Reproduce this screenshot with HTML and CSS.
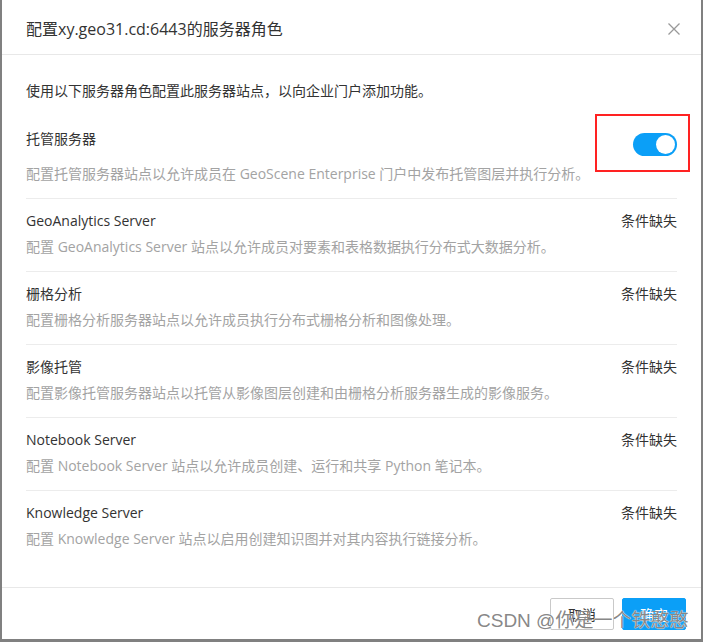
FILE: index.html
```html
<!DOCTYPE html>
<html lang="zh-CN">
<head>
<meta charset="utf-8">
<title>配置服务器角色</title>
<link rel="stylesheet" href="styles.css">
</head>
<body>
<div class="dialog">
  <header class="dlg-head">
    <h2 class="dlg-title">配置xy.geo31.cd:6443的服务器角色</h2>
    <button class="close" aria-label="关闭">
      <svg width="12" height="12" viewBox="0 0 12 12"><path d="M0.5 0.5 L11.5 11.5 M11.5 0.5 L0.5 11.5" stroke="#999" stroke-width="1.3" fill="none"/></svg>
    </button>
  </header>
  <div class="dlg-body">
    <p class="intro">使用以下服务器角色配置此服务器站点，以向企业门户添加功能。</p>
    <ul class="roles">
      <li class="role">
        <div class="role-head">
          <span class="role-name">托管服务器</span>
          <span class="toggle-wrap">
            <span class="toggle"><span class="knob"></span></span>
            <span class="highlight"></span>
          </span>
        </div>
        <p class="role-desc">配置托管服务器站点以允许成员在 GeoScene Enterprise 门户中发布托管图层并执行分析。</p>
      </li>
      <li class="role">
        <div class="role-head">
          <span class="role-name">GeoAnalytics Server</span>
          <span class="status">条件缺失</span>
        </div>
        <p class="role-desc">配置 GeoAnalytics Server 站点以允许成员对要素和表格数据执行分布式大数据分析。</p>
      </li>
      <li class="role">
        <div class="role-head">
          <span class="role-name">栅格分析</span>
          <span class="status">条件缺失</span>
        </div>
        <p class="role-desc">配置栅格分析服务器站点以允许成员执行分布式栅格分析和图像处理。</p>
      </li>
      <li class="role">
        <div class="role-head">
          <span class="role-name">影像托管</span>
          <span class="status">条件缺失</span>
        </div>
        <p class="role-desc">配置影像托管服务器站点以托管从影像图层创建和由栅格分析服务器生成的影像服务。</p>
      </li>
      <li class="role">
        <div class="role-head">
          <span class="role-name">Notebook Server</span>
          <span class="status">条件缺失</span>
        </div>
        <p class="role-desc">配置 Notebook Server 站点以允许成员创建、运行和共享 Python 笔记本。</p>
      </li>
      <li class="role">
        <div class="role-head">
          <span class="role-name">Knowledge Server</span>
          <span class="status">条件缺失</span>
        </div>
        <p class="role-desc">配置 Knowledge Server 站点以启用创建知识图并对其内容执行链接分析。</p>
      </li>
    </ul>
  </div>
  <footer class="dlg-foot">
    <button class="btn btn-default">取消</button>
    <button class="btn btn-primary">确定</button>
  </footer>
</div>
<div class="watermark">CSDN @你是一个铁憨憨</div>
</body>
</html>
```

FILE: styles.css
```css
html, body {
  margin: 0;
  padding: 0;
}
body {
  background: #808080;
  width: 703px;
  height: 642px;
  position: relative;
  overflow: hidden;
  font-family: "Open Sans", "Noto Sans CJK SC", sans-serif;
  color: #333;
}
.dialog {
  margin-left: 2px;
  width: 699px;
  height: 639px;
  background: #fff;
  display: flex;
  flex-direction: column;
  box-sizing: border-box;
}
.dlg-head {
  display: flex;
  justify-content: space-between;
  align-items: center;
  padding: 19px 21px 15px 24px;
  border-bottom: 1px solid #e8e8e8;
}
.dlg-title {
  margin: 0;
  font-size: 16px;
  line-height: 20px;
  font-weight: normal;
  color: #333;
}
.close {
  border: 0;
  background: none;
  padding: 0;
  width: 12px;
  height: 12px;
  display: flex;
  margin-top: -1px;
}
.dlg-body {
  flex: 1;
  padding: 26px 24px 24px;
}
.intro {
  margin: 0 0 16px;
  font-size: 14px;
  line-height: 20px;
  color: #333;
}
.roles {
  list-style: none;
  margin: 0;
  padding: 0;
}
.role {
  padding: 12px 0 14px;
  border-bottom: 1px solid #ececec;
}
.role:last-child {
  border-bottom: 0;
}
.role-head {
  display: flex;
  justify-content: space-between;
  align-items: flex-start;
  font-size: 14px;
  line-height: 20px;
}
.role-name {
  color: #333;
}
.status {
  color: #333;
}
.role-desc {
  margin: 6px 0 0;
  font-size: 14px;
  line-height: 20px;
  color: #a3a3a3;
}
.toggle-wrap {
  position: relative;
  display: block;
  margin: 4px 0 2px;
}
.toggle {
  display: block;
  width: 44px;
  height: 23px;
  border-radius: 12px;
  background: #0b9ff7;
  position: relative;
}
.knob {
  position: absolute;
  right: 2px;
  top: 2px;
  width: 19px;
  height: 19px;
  border-radius: 50%;
  background: #fff;
}
.highlight {
  position: absolute;
  top: -19px;
  left: -38px;
  right: -13px;
  bottom: -16px;
  border: 2px solid #f22;
}
.dlg-foot {
  display: flex;
  justify-content: flex-end;
  gap: 8px;
  padding: 10px 15px 9px;
  border-top: 1px solid #e8e8e8;
}
.btn {
  width: 64px;
  height: 32px;
  font-family: "Open Sans", "Noto Sans CJK SC", sans-serif;
  font-size: 14px;
  border-radius: 2px;
  padding: 0;
}
.btn-default {
  background: #fff;
  border: 1px solid #c9c9c9;
  color: #333;
}
.btn-primary {
  background: #0b9ff7;
  border: 1px solid #0b9ff7;
  color: #fff;
}
.watermark {
  position: absolute;
  left: 477px;
  top: 609px;
  font-family: "Liberation Sans", "Noto Sans CJK SC", sans-serif;
  font-size: 19px;
  line-height: 24px;
  color: rgba(120, 120, 120, 0.9);
  text-shadow: 0 0 1px #fff, 0 0 1px #fff;
  white-space: nowrap;
}
```
